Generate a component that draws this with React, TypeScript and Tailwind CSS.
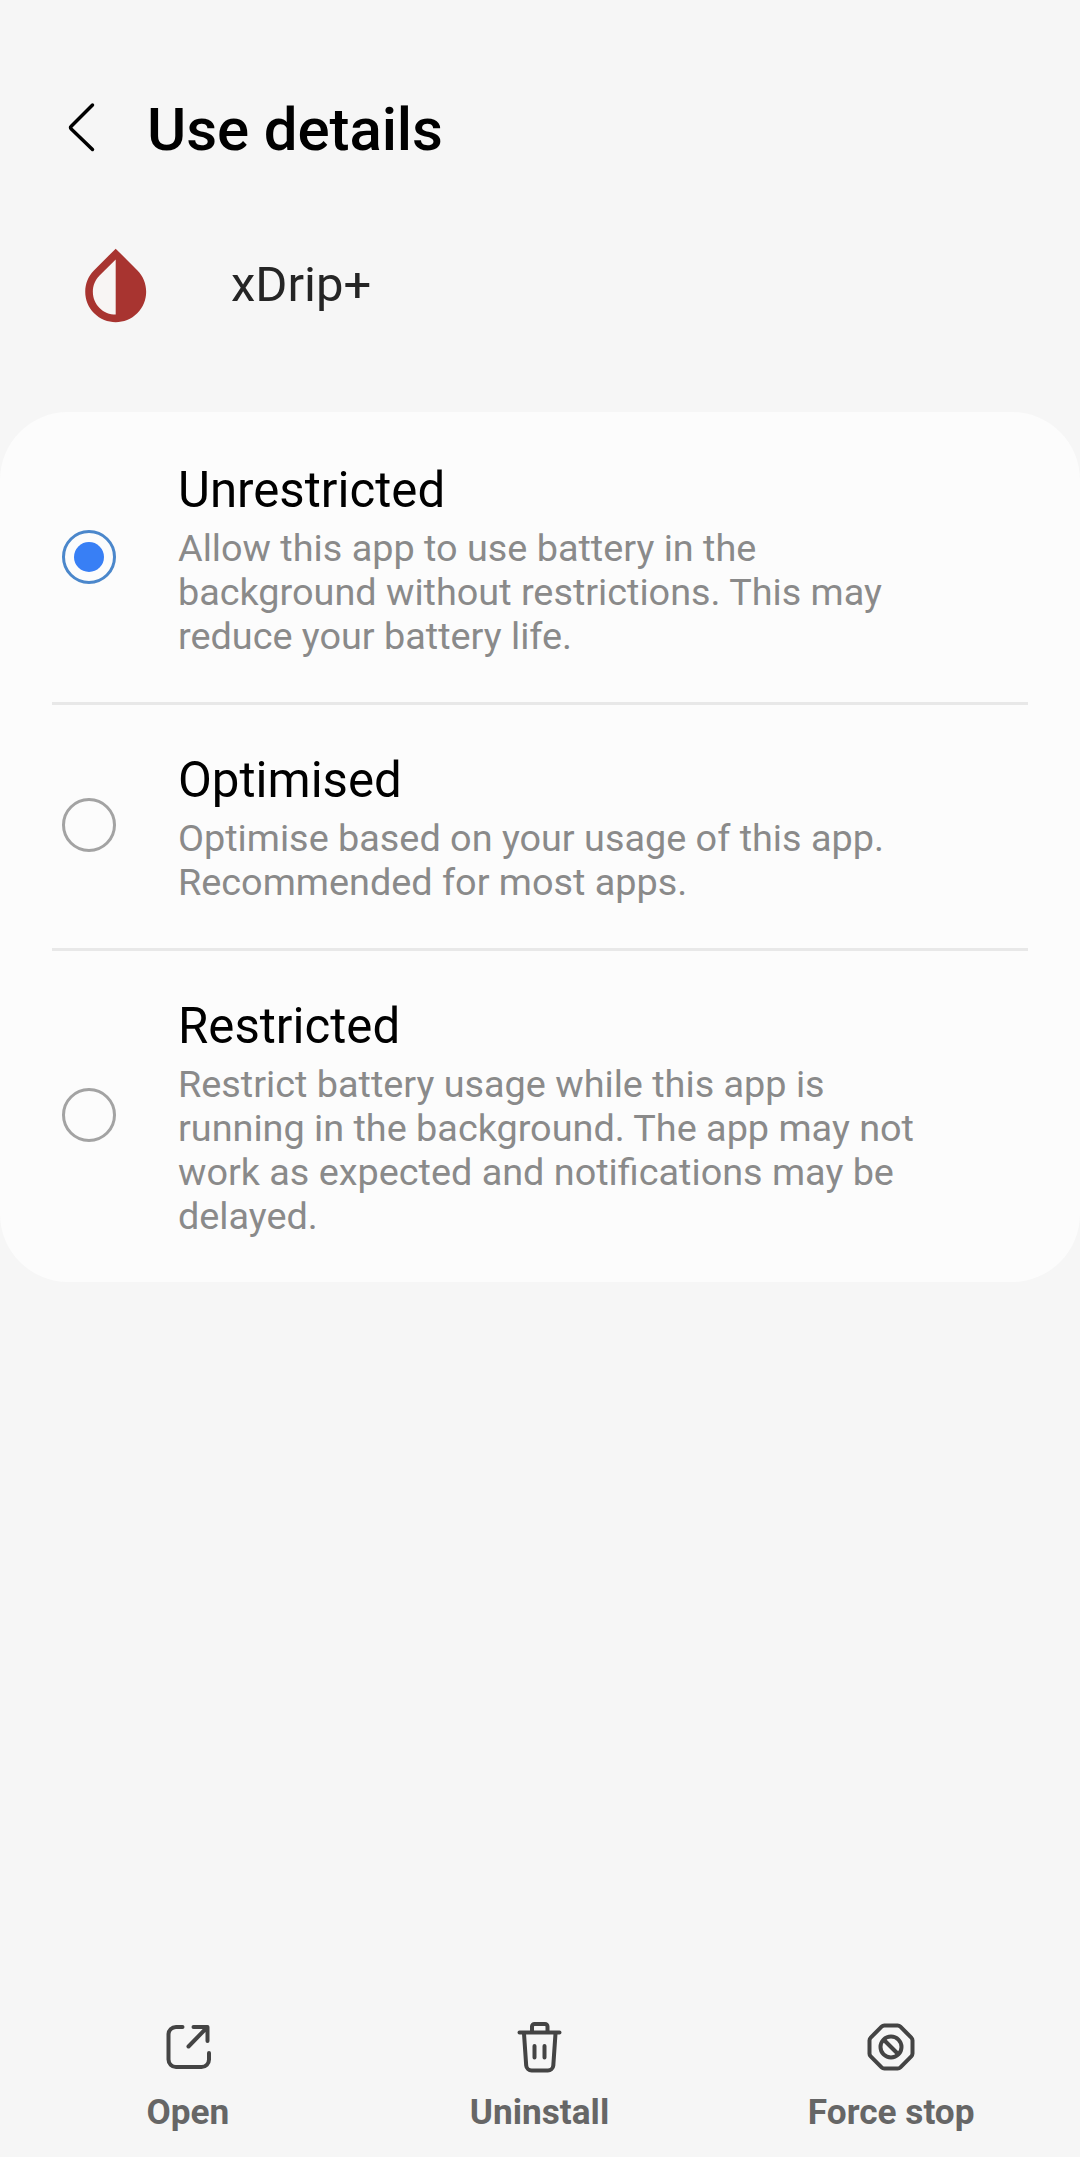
import { useState } from "react";
import type { ReactNode } from "react";

const options = [
  {
    title: "Unrestricted",
    lines: ["Allow this app to use battery in the", "background without restrictions. This may", "reduce your battery life."],
  },
  {
    title: "Optimised",
    lines: ["Optimise based on your usage of this app.", "Recommended for most apps."],
  },
  {
    title: "Restricted",
    lines: [
      "Restrict battery usage while this app is",
      "running in the background. The app may not",
      "work as expected and notifications may be",
      "delayed.",
    ],
  },
];

function OpenIcon() {
  return (
    <svg width="54" height="54" viewBox="0.5 0 54 54" fill="none" stroke="#444" strokeWidth="4" strokeLinecap="round" strokeLinejoin="round">
      <path d="M22 7h-6.500a7.500 7.500 0 0 0-7.500 7.500v25a7.500 7.500 0 0 0 7.500 7.500h25.500a7.500 7.500 0 0 0 7.500-7.500v-6.500" />
      <path d="M33 7h14v14M46.500 7.500L28 26.500" />
    </svg>
  );
}

function TrashIcon() {
  return (
    <svg width="54" height="54" viewBox="0 0 54 54" fill="none" stroke="#444" strokeWidth="4" strokeLinecap="round" strokeLinejoin="round">
      <path d="M6.500 12.500h40M19 11.500V6.500a2.500 2.500 0 0 1 2.500-2.500h10.500A2.500 2.500 0 0 1 34.500 6.500v5" />
      <path d="M11 13.500l2.200 32a5.500 5.500 0 0 0 5.500 5h16.100a5.500 5.500 0 0 0 5.500-5L42.500 13.500" />
      <path d="M21.500 26v11.500M31.500 26v11.500" />
    </svg>
  );
}

function StopIcon() {
  return (
    <svg width="54" height="54" viewBox="0 0 54 54" fill="none" stroke="#444" strokeWidth="4" strokeLinejoin="round">
      <path d="M20.400 5.500h13.200a4 4 0 0 1 2.800 1.200l10.900 10.900a4 4 0 0 1 1.200 2.800v13.200a4 4 0 0 1-1.200 2.800l-10.900 10.900a4 4 0 0 1-2.800 1.200h-13.200a4 4 0 0 1-2.800-1.200l-10.900-10.900a4 4 0 0 1-1.200-2.800v-13.200a4 4 0 0 1 1.200-2.800l10.900-10.900a4 4 0 0 1 2.800-1.200z" />
      <circle cx="27" cy="27" r="10.500" />
      <path d="M19.500 19.500l15 15" />
    </svg>
  );
}

function Action({ label, children }: { label: string; children: ReactNode }) {
  return (
    <button className="flex flex-1 flex-col items-center">
      {children}
      <span className="mt-[18px] text-[35.200px] leading-10 font-bold text-[#666]">{label}</span>
    </button>
  );
}

export default function App() {
  const [selected, setSelected] = useState(0);
  return (
    <div className="flex h-[2157px] w-[1080px] flex-col bg-[#f6f6f6] font-['Roboto',sans-serif] text-black">
      <header className="mt-[92px] flex h-[72px] items-center pl-[62px]">
        <svg width="40" height="56" viewBox="0 0 40 56" fill="none" stroke="#000" strokeWidth="3.500" strokeLinecap="round" strokeLinejoin="round">
          <path d="M30.500 5L9 26.500a1.500 1.500 0 0 0 0 2.200L30.500 49.500" />
        </svg>
        <h1 className="mt-1 ml-[45px] text-[60px] leading-[72px] font-medium tracking-[-0.1px]">Use details</h1>
      </header>

      <section className="mt-[76px] flex h-[92px] items-start pl-[70px]">
        <svg width="91.400" height="91.400" viewBox="0 0 24 24">
          <path fill="#f8f5f4" d="M12 4L6 10v8l6 2.500z" />
          <path
            fill="#a83430"
            d="M17.660 7.930L12 2.270 6.340 7.930c-3.120 3.120-3.120 8.190 0 11.310C7.900 20.800 9.950 21.580 12 21.580s4.100-.78 5.660-2.340c3.120-3.120 3.120-8.190 0-11.310zM12 19.590c-1.600 0-3.110-.62-4.240-1.760C6.620 16.690 6 15.190 6 13.590s.62-3.110 1.760-4.240L12 5.100v14.490z"
          />
        </svg>
        <span className="mt-[17px] ml-[69.600px] text-[49px] leading-[56px] text-[#252525]">xDrip+</span>
      </section>

      <main className="mt-[80px] flex flex-col rounded-[68px] bg-[#fcfcfc]">
        {options.map((option, i) => (
          <div key={option.title}>
            {i > 0 && <div className="mx-[52px] -mb-[3px] h-[3px] bg-[#e8e8e8]" />}
            <button
              role="radio"
              aria-checked={selected === i}
              onClick={() => setSelected(i)}
              className="flex w-full items-center pt-[50px] pb-[44px] pl-[62px] text-left"
            >
              <span
                className={
                  selected === i
                    ? "-mt-[6px] flex size-[54px] items-center justify-center rounded-full border-[3px] border-[#4b87cb]"
                    : "-mt-[6px] flex size-[54px] items-center justify-center rounded-full border-[3px] border-[#a3a3a3]"
                }
              >
                {selected === i && <span className="size-[30px] rounded-full bg-[#387ff5]" />}
              </span>
              <span className="ml-[62px] flex flex-col">
                <span className="text-[49.200px] leading-[56px]">{option.title}</span>
                <span className="mt-[8px] flex flex-col text-[37.800px] leading-[44px] text-[#8a8a8a]">
                  {option.lines.map((line) => (
                    <span key={line} className="whitespace-nowrap">{line}</span>
                  ))}
                </span>
              </span>
            </button>
          </div>
        ))}
      </main>

      <footer className="mt-auto mb-[25px] flex pr-[13px] pl-[12px]">
        <Action label="Open"><OpenIcon /></Action>
        <Action label="Uninstall"><TrashIcon /></Action>
        <Action label="Force stop"><StopIcon /></Action>
      </footer>
    </div>
  );
}
